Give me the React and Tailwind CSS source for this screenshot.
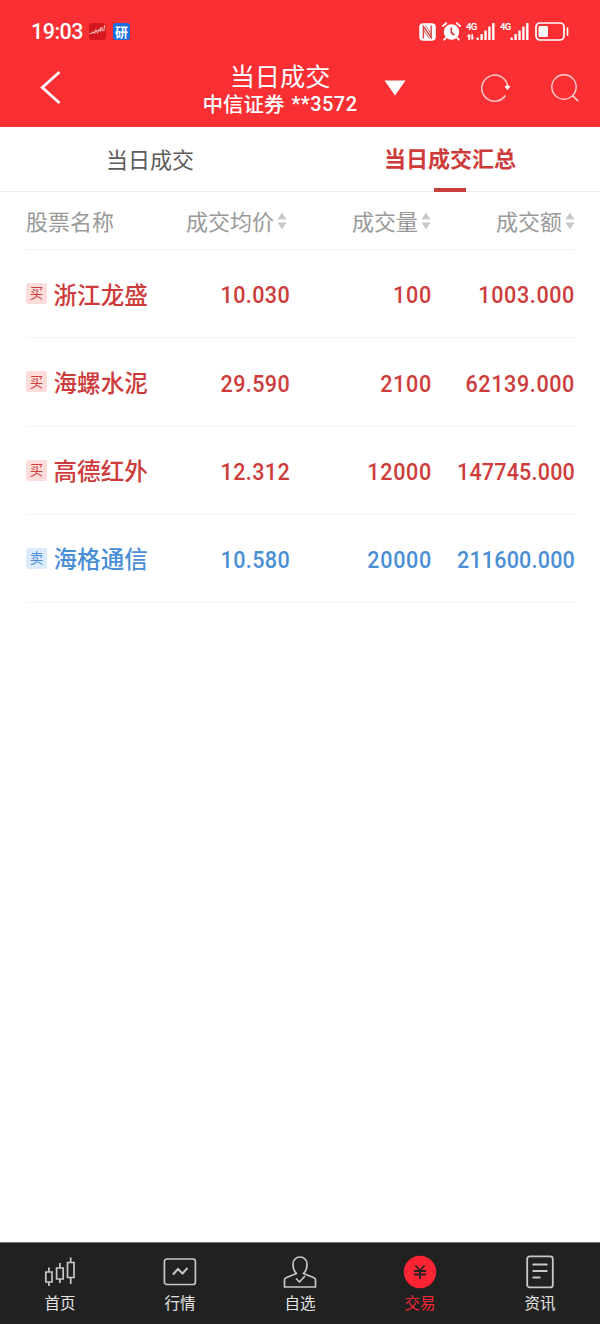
import React from 'react';

const rows = [
  { side: '买', name: '浙江龙盛', price: '10.030', volume: '100', amount: '1003.000' },
  { side: '买', name: '海螺水泥', price: '29.590', volume: '2100', amount: '62139.000' },
  { side: '买', name: '高德红外', price: '12.312', volume: '12000', amount: '147745.000' },
  { side: '卖', name: '海格通信', price: '10.580', volume: '20000', amount: '211600.000' },
];

const SignalBars = () => (
  <svg width="19" height="19" viewBox="0 0 19 19" fill="white">
    <rect x="0.5" y="15.5" width="2.4" height="2.5" rx="0.5" />
    <rect x="4.4" y="12" width="2.4" height="6" rx="0.5" />
    <rect x="8.3" y="8.5" width="2.4" height="9.5" rx="0.5" />
    <rect x="12.2" y="4.5" width="2.4" height="13.5" rx="0.5" />
    <rect x="16.1" y="1" width="2.4" height="17" rx="0.5" />
  </svg>
);

const StatusBar = () => (
  <div className="flex h-[63px] items-center justify-between pl-[31px] pr-[31px]">
    <div className="flex items-center">
      <span className="w-[52px] whitespace-nowrap font-['Roboto',sans-serif] text-[21.5px] font-medium leading-none tracking-[-0.5px]">19:03</span>
      <svg className="ml-[6px]" width="17" height="17" viewBox="0 0 17 17" fill="none">
        <rect width="17" height="17" rx="3" fill="#d3181f" />
        <path d="M0.5 10.5h2l1.5-1.5 1.5 1 1.5-3 1.5 2.5 1.5-3 1.5 1.5V4.5M13 8V4M14.7 8.5L15.7 2" stroke="#f7b0ae" strokeWidth="1.2" />
      </svg>
      <span className="ml-[7px] flex h-[17px] w-[17px] items-center justify-center rounded-[3px] bg-[#176fe0] text-[13px] font-bold leading-none">研</span>
    </div>

    <div className="flex items-center">
      {/* NFC */}
      <svg width="17" height="18" viewBox="0 0 17 18" fill="none">
        <rect x="0.2" y="0.3" width="16.6" height="17.4" rx="4" fill="white" />
        <path d="M4.4 15.5V3.5l7.8 11V2.5" stroke="#d8494c" strokeWidth="1.5" />
        <path d="M6.5 2.5l5.7 8.5M4.4 7l6 8.5" stroke="#d8494c" strokeWidth="0.9" />
      </svg>
      {/* Alarm */}
      <svg className="ml-[6px]" width="19" height="19" viewBox="0 0 19 19" fill="none">
        <circle cx="9.5" cy="10" r="7.7" fill="white" />
        <path d="M0.9 4L4.2 1.2M18.1 4L14.8 1.2M4.2 15.5l-2 2.2M14.8 15.5l2 2.2" stroke="white" strokeWidth="1.8" strokeLinecap="round" />
        <path d="M9.3 5.5v5l3 2.5" stroke="#d33a3e" strokeWidth="1.7" />
      </svg>
      <div className="ml-[5px] flex h-[19px] items-start">
        <div className="flex w-[10px] flex-col items-start">
          <span className="font-['Roboto',sans-serif] text-[9.5px] font-bold leading-[10px] tracking-[-0.8px]">4G</span>
          <svg className="mt-[2px]" width="9" height="6" viewBox="0 0 8 6" fill="white">
            <path d="M2.5 0L5 2.5H3.4V6H1.8V2.5H0zM5.5 6L3.8 3.5H5V0h1.4v3.5H8z" />
          </svg>
        </div>
        <SignalBars />
      </div>
      <div className="ml-[5px] flex h-[19px] items-start">
        <span className="w-[10px] font-['Roboto',sans-serif] text-[9.5px] font-bold leading-[10px] tracking-[-0.8px]">4G</span>
        <SignalBars />
      </div>
      <svg className="ml-[6px]" width="34" height="19" viewBox="0 0 34 19" fill="none">
        <rect x="1" y="1" width="28" height="17" rx="4" stroke="white" strokeWidth="1.7" />
        <rect x="3.5" y="4" width="9.5" height="11" rx="1.5" fill="white" />
        <path d="M32.5 6v7" stroke="white" strokeWidth="1.7" strokeLinecap="round" />
      </svg>
    </div>
  </div>
);

const TitleBar = () => (
  <div className="flex h-[50px] items-center">
    <svg className="ml-[39px] mt-[-2px]" width="24" height="36" viewBox="0 0 24 36" fill="none">
      <path d="M20.5 3L3.3 18.5l17.2 15.5" stroke="white" strokeWidth="2.8" />
    </svg>
    <div className="ml-[138px] flex w-[158px] flex-col items-center whitespace-nowrap pt-[3px]">
      <h1 className="text-[25.2px] leading-[28px]">当日成交</h1>
      <p className="flex text-[20.5px] font-medium leading-[28px]">
        中信证券
        <span className="ml-[7px] pt-px font-['Roboto',sans-serif] text-[20px] tracking-[0.5px]">**3572</span>
      </p>
    </div>
    <svg className="ml-[25px]" width="22" height="16" viewBox="0 0 22 16" fill="white">
      <path d="M0.5 0.5h21L11 15.5z" />
    </svg>
    {/* Refresh */}
    <svg className="ml-[74px]" width="31" height="30" viewBox="0 0 31 30" fill="none">
      <path d="M25.5 22.5A13 13 0 1 1 27.5 12.5" stroke="#ffd0d0" strokeWidth="1.4" />
      <path d="M24.5 13.5l3-1.5 3 1.5-3 3.5z" fill="white" />
    </svg>
    {/* Search */}
    <svg className="ml-[39px]" width="30" height="30" viewBox="0 0 30 30" fill="none">
      <circle cx="14" cy="14" r="12.2" stroke="#ffd0d0" strokeWidth="1.4" />
      <path d="M22.5 22.5l5.5 5.5" stroke="#ffd0d0" strokeWidth="1.7" />
    </svg>
  </div>
);

const SortIcon = () => (
  <svg width="10" height="18" viewBox="0 0 10 18" fill="#c9c9c9">
    <path d="M5 0.5l4.5 7h-9zM5 17.5l4.5-7h-9z" />
  </svg>
);

const TableHead = ({ label, className }) => (
  <div className={`flex items-center justify-end gap-[3px] whitespace-nowrap ${className}`}>
    <span>{label}</span>
    <SortIcon />
  </div>
);

const TableRow = ({ side, name, price, volume, amount }) => {
  const isBuy = side === '买';
  const cell = "origin-right scale-x-[0.88] pt-[4px] text-right font-['Roboto',sans-serif] text-[24.5px] font-medium";
  return (
    <div
      className={`grid h-[88.25px] grid-cols-[122px_142px_142px_143px] items-center border-b border-[#f3f3f3] ${
        isBuy ? 'text-[#cd3c3b]' : 'text-[#4a8fd6]'
      }`}
    >
      <div className="flex items-center gap-[6.5px] whitespace-nowrap">
        <span
          className={`flex h-[21px] w-[21px] shrink-0 items-center justify-center rounded-[2px] pb-px text-[13.5px] leading-none ${
            isBuy ? 'bg-[#fddcdc]' : 'bg-[#dcebfb]'
          }`}
        >
          {side}
        </span>
        <span className="text-[23.6px] font-medium leading-[30px]">{name}</span>
      </div>
      <span className={`${cell} tracking-[0.4px]`}>{price}</span>
      <span className={`${cell} tracking-[0.8px]`}>{volume}</span>
      <span className={`${cell} ${amount.length > 9 ? 'tracking-[0.2px]' : 'tracking-[0.7px]'}`}>{amount}</span>
    </div>
  );
};

const HomeIcon = () => (
  <svg width="32" height="32" viewBox="0 0 32 32" fill="none" stroke="#c8c8c8" strokeWidth="1.7">
    <path d="M1.8 16h6.2v10h-6.2zM12.6 12h6.6v11h-6.6zM23.5 6.5h6.5v15h-6.5zM4.9 11.5v4.5M4.9 26v4M15.9 7v5M15.9 23v4M26.7 1.5v5M26.7 21.5v6.5" />
  </svg>
);

const MarketIcon = () => (
  <svg width="34" height="32" viewBox="0 0 34 32" fill="none" stroke="#c8c8c8" strokeWidth="1.7">
    <rect x="1.4" y="3" width="31" height="25.5" rx="2.5" />
    <path d="M10 18.5l5-5.5 4.5 4.5 5-5.5" strokeWidth="2" />
  </svg>
);

const WatchIcon = () => (
  <svg width="34" height="32" viewBox="0 0 34 32" fill="none" stroke="#c8c8c8" strokeWidth="1.7" strokeLinejoin="round">
    <path d="M13.5 17.5C11 15.5 10 12 10 8.200c0-4.200 3-7.200 7-7.200s7 3 7 7.200c0 3.800-1 7.300-3.500 9.300l10.500 4.200q1.500.6 1.500 2.300V31H1.500v-7q0-1.700 1.500-2.300z" />
    <path d="M13 22.5l3.5 3.5 5.5-6" />
  </svg>
);

const TradeIcon = () => (
  <svg width="34" height="34" viewBox="0 0 34 34" fill="none">
    <circle cx="17" cy="17" r="16.2" fill="#fa2434" />
    <path d="M12.5 10.5l4.5 5 4.5-5M11 16h12M11 19.5h12M17 15.5v8.5" stroke="#222" strokeWidth="1.8" />
  </svg>
);

const NewsIcon = () => (
  <svg width="28" height="34" viewBox="0 0 28 34" fill="none" stroke="#c8c8c8" strokeWidth="1.8">
    <rect x="1.2" y="1.4" width="25.6" height="31" rx="2.5" />
    <path d="M6.5 9.5h15M6.5 16h15M6.5 22.5h8" />
  </svg>
);

const tabs = [
  { label: '首页', Icon: HomeIcon },
  { label: '行情', Icon: MarketIcon },
  { label: '自选', Icon: WatchIcon },
  { label: '交易', Icon: TradeIcon, active: true },
  { label: '资讯', Icon: NewsIcon },
];

const App = () => {
  return (
    <div className="flex h-[1324px] w-[600px] flex-col overflow-hidden bg-white font-['Noto_Sans_CJK_SC',sans-serif]">
      {/* Header */}
      <header className="h-[127px] shrink-0 bg-[#f92f34] text-white">
        <StatusBar />
        <TitleBar />
      </header>

      {/* Tabs */}
      <div className="grid h-[65px] shrink-0 grid-cols-2 border-b border-[#ededed] text-[22px]">
        <div className="flex items-center justify-center pb-[2px] text-[#5c5c5c]">当日成交</div>
        <div className="-mb-px flex flex-col items-center justify-between font-bold text-[#cd3c3b]">
          <span className="pt-[14px] leading-[32px]">当日成交汇总</span>
          <span className="h-1 w-8 bg-[#c9403f]" />
        </div>
      </div>

      {/* Table */}
      <main className="flex-1 pl-[26px] pr-[25px]">
        <div className="grid h-[58px] grid-cols-[122px_142px_142px_143px] items-center border-b border-[#f0f0f0] text-[22px] text-[#999999]">
          <span>股票名称</span>
          <TableHead label="成交均价" className="pr-[3px]" />
          <TableHead label="成交量" className="pr-px" />
          <TableHead label="成交额" className="pr-0" />
        </div>
        {rows.map((row) => (
          <TableRow key={row.name} {...row} />
        ))}
      </main>

      {/* Bottom navigation */}
      <nav className="grid h-[82px] shrink-0 grid-cols-5 border-t border-[#777777] bg-[#212121]">
        {tabs.map(({ label, Icon, active }) => (
          <div key={label} className="flex flex-col items-center pt-[11px]">
            <div className="flex h-[36px] items-center">
              <Icon />
            </div>
            <span className={`text-[15.5px] leading-[25px] ${active ? 'text-[#fa2434]' : 'text-[#e4e4e4]'}`}>{label}</span>
          </div>
        ))}
      </nav>
    </div>
  );
};

export default App;
